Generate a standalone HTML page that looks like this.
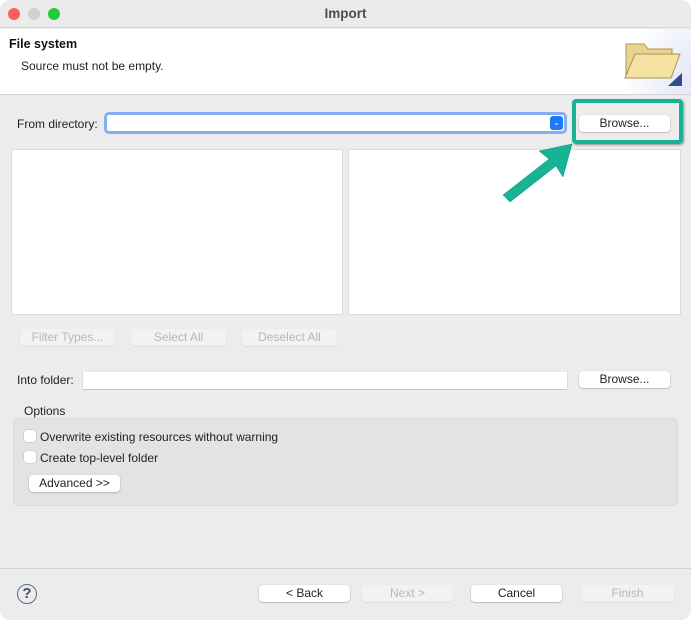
<!DOCTYPE html>
<html><head><style>
*{margin:0;padding:0;box-sizing:border-box}
body{width:691px;height:620px;background:#fff;font-family:"Liberation Sans",sans-serif;font-size:12px;color:#222;position:relative;overflow:hidden}
.win{position:absolute;left:0;top:0;width:691px;height:620px;background:#ececec;border-radius:10px;overflow:hidden}
.abs{position:absolute}
.btn{position:absolute;height:17px;background:#fff;border-radius:4px;box-shadow:0 0.5px 1.5px rgba(0,0,0,.35);text-align:center;line-height:17px;font-size:12px;color:#222}
.dis{background:#f2f2f2;color:#b8b8b8;box-shadow:0 0.5px 1px rgba(0,0,0,.12)}
.cb{position:absolute;width:12px;height:12px;background:#fff;border-radius:3px;box-shadow:0 0 0 .5px #bbb}
</style></head><body>
<div class="win">
 <div class="abs" style="left:0;top:0;width:691px;height:28px;background:#ebebeb;border-bottom:1px solid #d8d8d8"></div>
 <div class="abs" style="left:8px;top:8px;width:12px;height:12px;border-radius:50%;background:#fe5f57"></div>
 <div class="abs" style="left:28px;top:8px;width:12px;height:12px;border-radius:50%;background:#d0d0d0"></div>
 <div class="abs" style="left:48px;top:8px;width:12px;height:12px;border-radius:50%;background:#28c840"></div>
 <div class="abs" style="left:0;top:6px;width:691px;text-align:center;font-size:13.5px;font-weight:bold;color:#4d4d4d">Import</div>

 <div class="abs" style="left:0;top:29px;width:691px;height:66px;background:#fff;border-bottom:1px solid #d4d4d4"></div>
 <div class="abs" style="left:600px;top:29px;width:91px;height:65px;background:radial-gradient(circle at 120% 90%,#dfe4f5 0,#eef0fa 40%,#fff 70%)"></div>
 <div class="abs" style="left:9px;top:37px;font-size:12.5px;font-weight:bold;color:#111">File system</div>
 <div class="abs" style="left:21px;top:59px;font-size:12px;color:#222">Source must not be empty.</div>
 <svg class="abs" style="left:620px;top:38px" width="66" height="50">
  <path d="M6 6 L24 6 L28 11 L52 11 L52 38 L6 38 Z" fill="#e9d38f" stroke="#a89458" stroke-width="1"/>
  <path d="M15 16 L60 16 L51 40 L5 40 Z" fill="#f5e2a0" stroke="#a89458" stroke-width="1"/>
  <path d="M48 48 L62 48 L62 35 Z" fill="#2c4f8a"/>
 </svg>

 <div class="abs" style="left:17px;top:117px;font-size:12px">From directory:</div>
 <div class="abs" style="left:104px;top:112px;width:463px;height:22px;border-radius:5px;border:3px solid #86aef0;background:#fff"></div>
 <div class="abs" style="left:550px;top:116px;width:13px;height:14px;border-radius:3px;background:#1d7af7;color:#fff;font-size:8px;text-align:center;line-height:14px">&#8964;</div>
 <div class="btn" style="left:579px;top:115px;width:91px">Browse...</div>

 <div class="abs" style="left:11px;top:149px;width:332px;height:166px;background:#fff;border:1px solid #dcdcdc"></div>
 <div class="abs" style="left:348px;top:149px;width:333px;height:166px;background:#fff;border:1px solid #dcdcdc"></div>

 <div class="abs" style="left:572px;top:99px;width:111px;height:45px;border:4px solid #17b394;border-radius:4px;box-shadow:1px 1px 2px rgba(0,0,0,.4)"></div>
 <svg class="abs" style="left:0;top:0;z-index:5" width="691" height="620"><polygon points="572,144 539,151 549,159 503,195 510,202 556,166 563,177" fill="#17b394" stroke="#0f8f76" stroke-width=".5"/></svg>

 <div class="btn dis" style="left:20px;top:329px;width:95px">Filter Types...</div>
 <div class="btn dis" style="left:131px;top:329px;width:95px">Select All</div>
 <div class="btn dis" style="left:242px;top:329px;width:95px">Deselect All</div>

 <div class="abs" style="left:17px;top:373px">Into folder:</div>
 <div class="abs" style="left:83px;top:372px;width:484px;height:17px;background:#fff;box-shadow:0 0.5px 1px rgba(0,0,0,.3)"></div>
 <div class="btn" style="left:579px;top:371px;width:91px">Browse...</div>

 <div class="abs" style="left:24px;top:404px">Options</div>
 <div class="abs" style="left:13px;top:418px;width:665px;height:88px;background:#e3e3e3;border-radius:5px;border:1px solid #dadada"></div>
 <div class="cb" style="left:24px;top:430px"></div>
 <div class="abs" style="left:40px;top:430px">Overwrite existing resources without warning</div>
 <div class="cb" style="left:24px;top:451px"></div>
 <div class="abs" style="left:40px;top:451px">Create top-level folder</div>
 <div class="btn" style="left:29px;top:475px;width:91px">Advanced &gt;&gt;</div>

 <div class="abs" style="left:0;top:568px;width:691px;height:1px;background:#d6d6d6"></div>
 <div class="abs" style="left:17px;top:584px;width:20px;height:20px;border-radius:50%;border:1.5px solid #5a6a8a;text-align:center;line-height:17px;font-size:15px;color:#3f4e6e;font-weight:bold">?</div>
 <div class="btn" style="left:259px;top:585px;width:91px">&lt; Back</div>
 <div class="btn dis" style="left:362px;top:585px;width:91px">Next &gt;</div>
 <div class="btn" style="left:471px;top:585px;width:91px">Cancel</div>
 <div class="btn dis" style="left:581px;top:585px;width:93px">Finish</div>
</div>
</body></html>
